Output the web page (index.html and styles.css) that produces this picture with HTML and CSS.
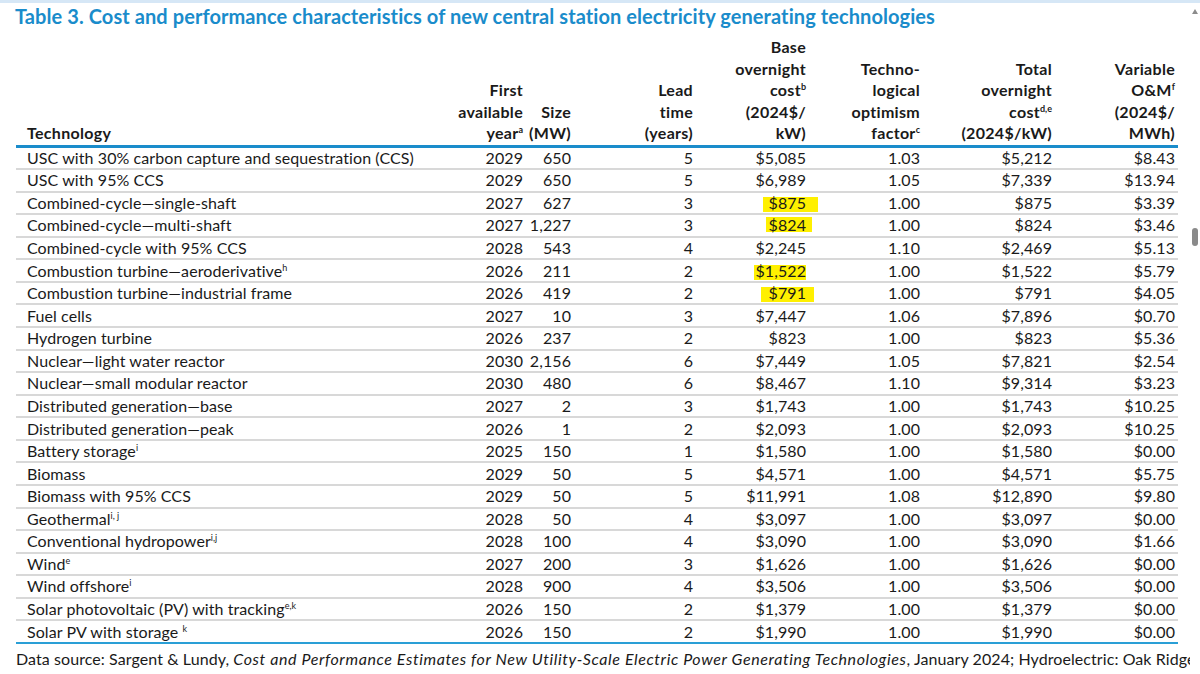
FILE: index.html
```html
<!DOCTYPE html>
<html lang="en">
<head>
<meta charset="utf-8">
<title>Table 3</title>
<link rel="stylesheet" href="styles.css">
</head>
<body>
<div class="topbar"></div>
<div class="page">
  <div class="content">
    <h1 class="title">Table 3. Cost and performance characteristics of new central station electricity generating technologies</h1>
    <div class="tbl">
      <div class="row head">
        <div class="cell left">Technology</div>
        <div class="cell">First<br>available<br>year<sup>a</sup></div>
        <div class="cell">Size<br>(MW)</div>
        <div class="cell">Lead<br>time<br>(years)</div>
        <div class="cell">Base<br>overnight<br>cost<sup>b</sup><br>(2024$/<br>kW)</div>
        <div class="cell">Techno-<br>logical<br>optimism<br>factor<sup>c</sup></div>
        <div class="cell">Total<br>overnight<br>cost<sup>d,e</sup><br>(2024$/kW)</div>
        <div class="cell">Variable<br>O&amp;M<sup>f</sup><br>(2024$/<br>MWh)</div>
      </div>
      <div class="row"><div class="cell left">USC with 30% carbon capture and sequestration (CCS)</div><div class="cell">2029</div><div class="cell">650</div><div class="cell">5</div><div class="cell">$5,085</div><div class="cell">1.03</div><div class="cell">$5,212</div><div class="cell">$8.43</div></div>
      <div class="row"><div class="cell left">USC with 95% CCS</div><div class="cell">2029</div><div class="cell">650</div><div class="cell">5</div><div class="cell">$6,989</div><div class="cell">1.05</div><div class="cell">$7,339</div><div class="cell">$13.94</div></div>
      <div class="row"><div class="cell left">Combined-cycle—single-shaft</div><div class="cell">2027</div><div class="cell">627</div><div class="cell">3</div><div class="cell"><span class="hl hl-a">$875</span></div><div class="cell">1.00</div><div class="cell">$875</div><div class="cell">$3.39</div></div>
      <div class="row"><div class="cell left">Combined-cycle—multi-shaft</div><div class="cell">2027</div><div class="cell">1,227</div><div class="cell">3</div><div class="cell"><span class="hl hl-b">$824</span></div><div class="cell">1.00</div><div class="cell">$824</div><div class="cell">$3.46</div></div>
      <div class="row"><div class="cell left">Combined-cycle with 95% CCS</div><div class="cell">2028</div><div class="cell">543</div><div class="cell">4</div><div class="cell">$2,245</div><div class="cell">1.10</div><div class="cell">$2,469</div><div class="cell">$5.13</div></div>
      <div class="row"><div class="cell left">Combustion turbine—aeroderivative<sup>h</sup></div><div class="cell">2026</div><div class="cell">211</div><div class="cell">2</div><div class="cell"><span class="hl hl-c">$1,522</span></div><div class="cell">1.00</div><div class="cell">$1,522</div><div class="cell">$5.79</div></div>
      <div class="row"><div class="cell left">Combustion turbine—industrial frame</div><div class="cell">2026</div><div class="cell">419</div><div class="cell">2</div><div class="cell"><span class="hl hl-d">$791</span></div><div class="cell">1.00</div><div class="cell">$791</div><div class="cell">$4.05</div></div>
      <div class="row"><div class="cell left">Fuel cells</div><div class="cell">2027</div><div class="cell">10</div><div class="cell">3</div><div class="cell">$7,447</div><div class="cell">1.06</div><div class="cell">$7,896</div><div class="cell">$0.70</div></div>
      <div class="row"><div class="cell left">Hydrogen turbine</div><div class="cell">2026</div><div class="cell">237</div><div class="cell">2</div><div class="cell">$823</div><div class="cell">1.00</div><div class="cell">$823</div><div class="cell">$5.36</div></div>
      <div class="row"><div class="cell left">Nuclear—light water reactor</div><div class="cell">2030</div><div class="cell">2,156</div><div class="cell">6</div><div class="cell">$7,449</div><div class="cell">1.05</div><div class="cell">$7,821</div><div class="cell">$2.54</div></div>
      <div class="row"><div class="cell left">Nuclear—small modular reactor</div><div class="cell">2030</div><div class="cell">480</div><div class="cell">6</div><div class="cell">$8,467</div><div class="cell">1.10</div><div class="cell">$9,314</div><div class="cell">$3.23</div></div>
      <div class="row"><div class="cell left">Distributed generation—base</div><div class="cell">2027</div><div class="cell">2</div><div class="cell">3</div><div class="cell">$1,743</div><div class="cell">1.00</div><div class="cell">$1,743</div><div class="cell">$10.25</div></div>
      <div class="row"><div class="cell left">Distributed generation—peak</div><div class="cell">2026</div><div class="cell">1</div><div class="cell">2</div><div class="cell">$2,093</div><div class="cell">1.00</div><div class="cell">$2,093</div><div class="cell">$10.25</div></div>
      <div class="row"><div class="cell left">Battery storage<sup>i</sup></div><div class="cell">2025</div><div class="cell">150</div><div class="cell">1</div><div class="cell">$1,580</div><div class="cell">1.00</div><div class="cell">$1,580</div><div class="cell">$0.00</div></div>
      <div class="row"><div class="cell left">Biomass</div><div class="cell">2029</div><div class="cell">50</div><div class="cell">5</div><div class="cell">$4,571</div><div class="cell">1.00</div><div class="cell">$4,571</div><div class="cell">$5.75</div></div>
      <div class="row"><div class="cell left">Biomass with 95% CCS</div><div class="cell">2029</div><div class="cell">50</div><div class="cell">5</div><div class="cell">$11,991</div><div class="cell">1.08</div><div class="cell">$12,890</div><div class="cell">$9.80</div></div>
      <div class="row"><div class="cell left">Geothermal<sup>i, j</sup></div><div class="cell">2028</div><div class="cell">50</div><div class="cell">4</div><div class="cell">$3,097</div><div class="cell">1.00</div><div class="cell">$3,097</div><div class="cell">$0.00</div></div>
      <div class="row"><div class="cell left">Conventional hydropower<sup>i,j</sup></div><div class="cell">2028</div><div class="cell">100</div><div class="cell">4</div><div class="cell">$3,090</div><div class="cell">1.00</div><div class="cell">$3,090</div><div class="cell">$1.66</div></div>
      <div class="row"><div class="cell left">Wind<sup>e</sup></div><div class="cell">2027</div><div class="cell">200</div><div class="cell">3</div><div class="cell">$1,626</div><div class="cell">1.00</div><div class="cell">$1,626</div><div class="cell">$0.00</div></div>
      <div class="row"><div class="cell left">Wind offshore<sup>i</sup></div><div class="cell">2028</div><div class="cell">900</div><div class="cell">4</div><div class="cell">$3,506</div><div class="cell">1.00</div><div class="cell">$3,506</div><div class="cell">$0.00</div></div>
      <div class="row"><div class="cell left">Solar photovoltaic (PV) with tracking<sup>e,k</sup></div><div class="cell">2026</div><div class="cell">150</div><div class="cell">2</div><div class="cell">$1,379</div><div class="cell">1.00</div><div class="cell">$1,379</div><div class="cell">$0.00</div></div>
      <div class="row last"><div class="cell left">Solar PV with storage <sup>k</sup></div><div class="cell">2026</div><div class="cell">150</div><div class="cell">2</div><div class="cell">$1,990</div><div class="cell">1.00</div><div class="cell">$1,990</div><div class="cell">$0.00</div></div>
    </div>
    <div class="note">
      <div class="note-line">Data source: Sargent &amp; Lundy, <i>Cost and Performance Estimates for New Utility-Scale Electric Power Generating Technologies</i>, January 2024; Hydroelectric: Oak Ridge National Laboratory,</div>
      <div class="note-line">of Energy Potential at Non-Powered Dams in the United States, 2012; and Idaho National Engineering and Environmental Laboratory, <i>Estimation of Economic Parameters of U.S. Hydropower Resources</i></div>
    </div>
  </div>
  <div class="scrollbar">
    <div class="arrow"></div>
    <div class="thumb"></div>
  </div>
</div>
</body>
</html>
```

FILE: styles.css
```css
html, body {
  margin: 0;
  padding: 0;
  background: #ffffff;
}
body {
  width: 1200px;
  height: 674px;
  overflow: hidden;
  font-family: Lato, "Open Sans", "Liberation Sans", sans-serif;
  color: #1a1a1a;
}
.topbar {
  height: 3px;
  background: #d6e7f6;
}
.page {
  display: flex;
  width: 1200px;
  height: 671px;
}
.content {
  width: 1190px;
  overflow: hidden;
}
.title {
  margin: 0;
  padding: 1px 0 0 15px;
  font-size: 20px;
  letter-spacing: 0.08px;
  line-height: 25px;
  font-weight: 700;
  color: #1a8ccb;
  white-space: nowrap;
}
.tbl {
  margin: 7px 0 0 16px;
  width: 1162px;
  font-size: 16px;
  letter-spacing: 0.08px;
}
.row {
  display: grid;
  grid-template-columns: 439px 71px 48px 122px 113px 114px 132px 123px;
  height: 22.57px;
  box-sizing: border-box;
  align-items: center;
  border-bottom: 2px solid #d8d8d8;
}
.row.head {
  height: auto;
  align-items: end;
  font-weight: 700;
  letter-spacing: 0.3px;
  padding-bottom: 1px;
  border-bottom: 3px solid #1a8ccb;
}
.row.last {
  border-bottom: 2px solid #2a9fd6;
}
.cell {
  text-align: right;
  padding-right: 3px;
  white-space: nowrap;
  line-height: 20px;
}
.row.head .cell {
  line-height: 21.5px;
}
.cell.left {
  text-align: left;
  padding-left: 11px;
}
sup {
  font-size: 9px;
  line-height: 0;
  vertical-align: 6px;
  letter-spacing: 0;
}
.hl {
  position: relative;
  z-index: 0;
}
.hl::before {
  content: "";
  position: absolute;
  z-index: -1;
  background: #fff000;
  top: 4px;
  bottom: 0;
}
.hl-a::before { left: -6px; right: -12px; }
.hl-b::before { left: -3px; right: -6px; top: 2px; bottom: 2px; }
.hl-c::before { left: -1px; right: 0; }
.hl-d::before { left: -8px; right: -8px; }
.note {
  padding: 5px 0 0 16px;
  font-size: 16px;
  letter-spacing: 0.08px;
  line-height: 20px;
}
.note i {
  letter-spacing: 0.6px;
}
.note-line {
  white-space: nowrap;
}
.scrollbar {
  width: 10px;
  display: flex;
  flex-direction: column;
  align-items: center;
  background: #ffffff;
}
.arrow {
  margin-top: 6px;
  width: 0;
  height: 0;
  border-left: 3px solid transparent;
  border-right: 3px solid transparent;
  border-bottom: 5px solid #8c8c8c;
}
.thumb {
  margin-top: 214px;
  width: 6px;
  height: 18px;
  border-radius: 3px;
  background: #8a8a8a;
}
```
